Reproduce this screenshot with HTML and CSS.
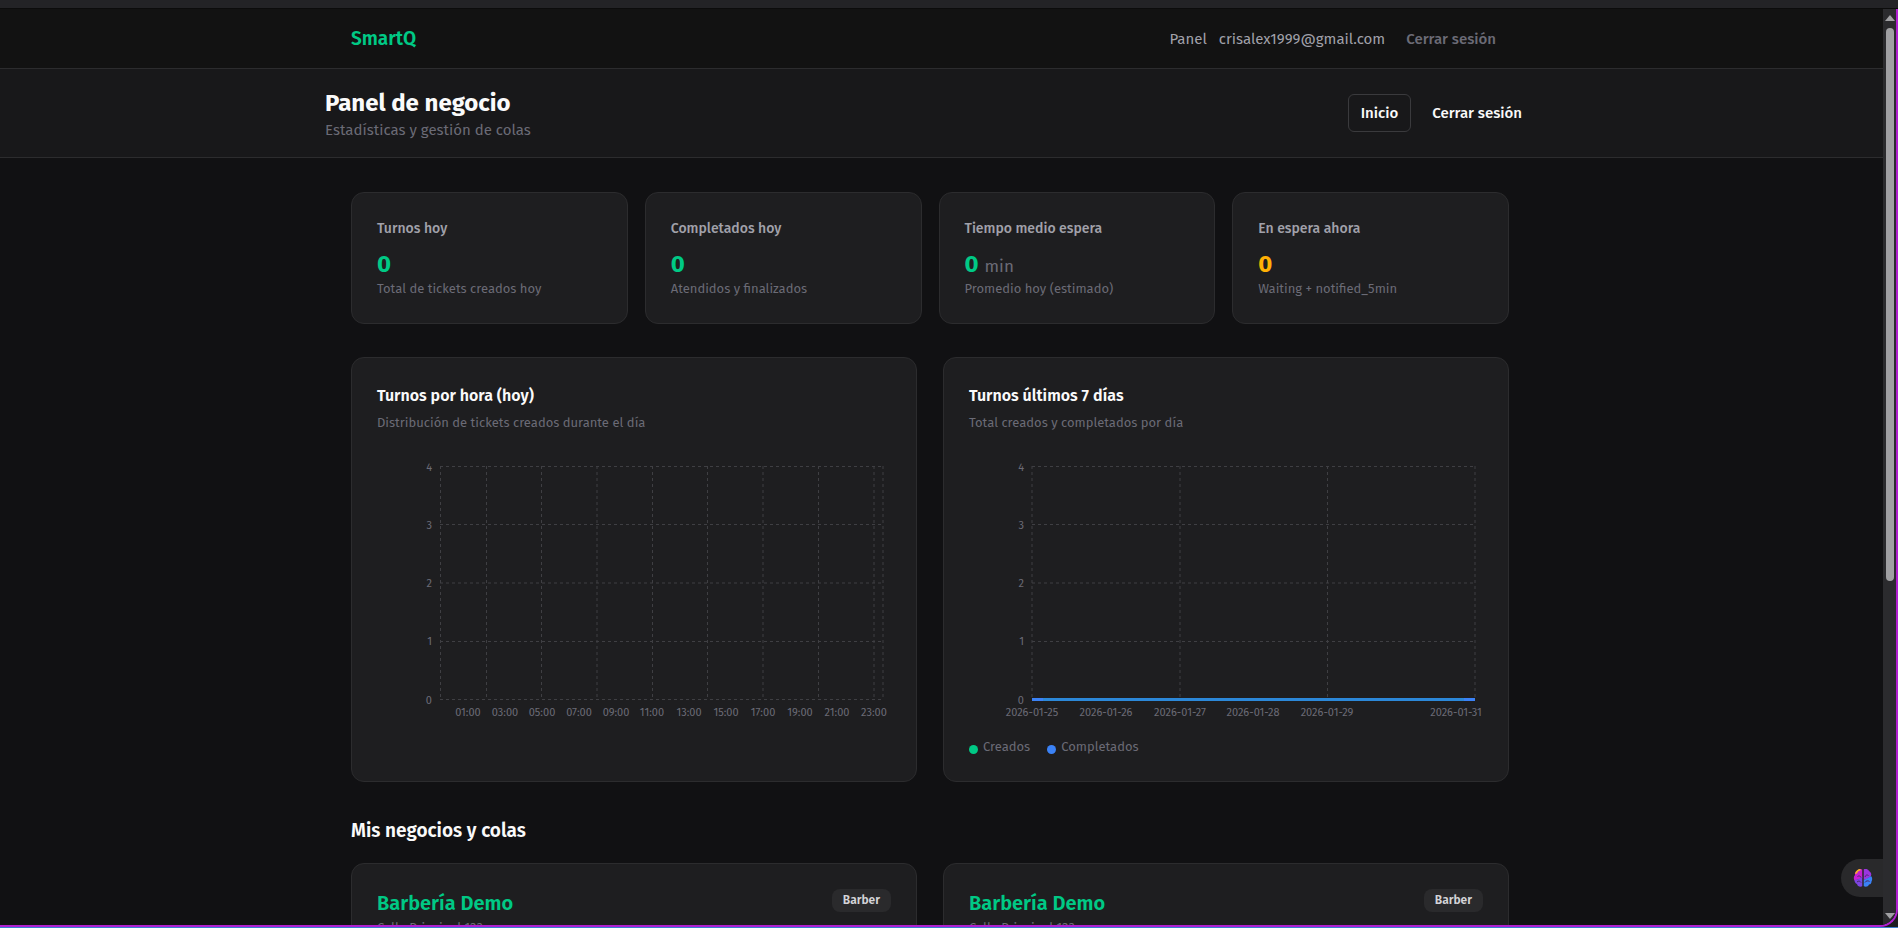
FILE: index.html
```html
<!DOCTYPE html>
<html lang="es">
<head>
  <meta charset="UTF-8">
  <meta name="viewport" content="width=device-width, initial-scale=1.0">
  <title>Panel de negocio | SmartQ</title>
  <link rel="stylesheet" href="styles.css">
</head>
<body>
  <div class="tab-strip"></div>
  <div class="window">
    <div class="page">
      <nav class="navbar band">
        <div class="container navbar-inner">
          <a class="brand" href="#">SmartQ</a>
          <div class="nav-links">
            <a href="#">Panel</a>
            <span class="nav-email">crisalex1999@gmail.com</span>
            <button class="btn btn-muted" type="button">Cerrar sesión</button>
          </div>
        </div>
      </nav>

      <header class="page-header band">
        <div class="container header-inner">
          <div>
            <h1>Panel de negocio</h1>
            <p>Estadísticas y gestión de colas</p>
          </div>
          <div class="header-actions">
            <a class="btn btn-outline" href="#">Inicio</a>
            <button class="btn" type="button">Cerrar sesión</button>
          </div>
        </div>
      </header>

      <main class="band">
        <div class="container main">
          <section class="stats">
            <div class="card stat">
              <h2>Turnos hoy</h2>
              <div class="stat-value">0</div>
              <p>Total de tickets creados hoy</p>
            </div>
            <div class="card stat">
              <h2>Completados hoy</h2>
              <div class="stat-value">0</div>
              <p>Atendidos y finalizados</p>
            </div>
            <div class="card stat">
              <h2>Tiempo medio espera</h2>
              <div class="stat-value">0 <span>min</span></div>
              <p>Promedio hoy (estimado)</p>
            </div>
            <div class="card stat">
              <h2>En espera ahora</h2>
              <div class="stat-value warning">0</div>
              <p>Waiting + notified_5min</p>
            </div>
          </section>

          <section class="two-cols charts">
            <div class="card chart-card">
              <h3>Turnos por hora (hoy)</h3>
              <p>Distribución de tickets creados durante el día</p>
              <svg class="chart" viewBox="0 0 514 278" role="img" aria-label="Turnos por hora">
                <g class="grid">
                  <path d="M63 6.5H506M63 64.5H506M63 123H506M63 181.5H506M63 239.5H506" />
                  <path d="M63.5 6V240M109.5 6V240M164.5 6V240M220 6V240M275.5 6V240M330.5 6V240M386 6V240M441.5 6V240M497 6V240M506 6V240" />
                </g>
                <g class="ticks ticks-y">
                  <text x="55" y="11">4</text>
                  <text x="55" y="69">3</text>
                  <text x="55" y="127">2</text>
                  <text x="55" y="185">1</text>
                  <text x="55" y="244">0</text>
                </g>
                <g class="ticks">
                  <text x="91" y="256">01:00</text>
                  <text x="128" y="256">03:00</text>
                  <text x="165" y="256">05:00</text>
                  <text x="202" y="256">07:00</text>
                  <text x="239" y="256">09:00</text>
                  <text x="275" y="256">11:00</text>
                  <text x="312" y="256">13:00</text>
                  <text x="349" y="256">15:00</text>
                  <text x="386" y="256">17:00</text>
                  <text x="423" y="256">19:00</text>
                  <text x="460" y="256">21:00</text>
                  <text x="497" y="256">23:00</text>
                </g>
              </svg>
            </div>

            <div class="card chart-card">
              <h3>Turnos últimos 7 días</h3>
              <p>Total creados y completados por día</p>
              <svg class="chart" viewBox="0 0 514 278" role="img" aria-label="Turnos últimos 7 días">
                <g class="grid">
                  <path d="M63 6.5H506M63 64.5H506M63 123H506M63 181.5H506M63 239.5H506" />
                  <path d="M63 6V240M211 6V240M358.5 6V240M506 6V240" />
                </g>
                <path class="line-completed" d="M63 239.5H506" />
                <path class="line-overlap" d="M74 239.5H495" />
                <g class="ticks ticks-y">
                  <text x="55" y="11">4</text>
                  <text x="55" y="69">3</text>
                  <text x="55" y="127">2</text>
                  <text x="55" y="185">1</text>
                  <text x="55" y="244">0</text>
                </g>
                <g class="ticks">
                  <text x="63" y="256">2026-01-25</text>
                  <text x="137" y="256">2026-01-26</text>
                  <text x="211" y="256">2026-01-27</text>
                  <text x="284" y="256">2026-01-28</text>
                  <text x="358" y="256">2026-01-29</text>
                  <text x="487" y="256">2026-01-31</text>
                </g>
              </svg>
              <ul class="legend">
                <li><i class="dot"></i>Creados</li>
                <li><i class="dot dot-blue"></i>Completados</li>
              </ul>
            </div>
          </section>

          <h2 class="section-title">Mis negocios y colas</h2>
          <section class="two-cols">
            <div class="card business">
              <div>
                <h3>Barbería Demo</h3>
                <p>Calle Principal 123</p>
              </div>
              <span class="badge">Barber</span>
            </div>
            <div class="card business">
              <div>
                <h3>Barbería Demo</h3>
                <p>Calle Principal 123</p>
              </div>
              <span class="badge">Barber</span>
            </div>
          </section>
        </div>
      </main>

      <button class="assistant" type="button" aria-label="Asistente">
        <svg viewBox="0 0 20 20" width="20" height="20">
          <path fill="#c61fd0" d="M9.500 1.500C7.500.5 5.500 1 4.500 2.500 2.500 3 1.500 5 2 7 .5 8.500.5 11 1.500 12.500L5 11.500 9.500 10z" />
          <path fill="#f5b521" d="M7.500 1C5.500.8 2.500 2.500 2 6L4 5.500C4.500 3.500 6 2.500 7.500 2.500z" />
          <path fill="#7d45e0" d="M1.500 12C1.500 14 2.500 15.500 4 16 4.500 18.500 7.500 19.500 9.500 18V8L6 11z" />
          <path fill="#9a35e0" d="M10.500 1.500C12.500.5 15 1 16 3 18 4 18.800 6 18 8L14 11 10.500 12z" />
          <path fill="#3b82f6" d="M18 8C19.500 9.500 19.500 12 18.500 13.500 18.500 15.500 17.500 16.500 16 16.500 15 19 12.500 19.300 10.500 18V12L14 10.500z" />
          <path fill="none" stroke="#29292b" stroke-width="1" d="M10 1V19" />
          <path fill="none" stroke="#4a2a6a" stroke-width="1" d="M4.500 8.500C6 7.500 7.500 8 8 9.500M4 14C5.500 12.500 7 13 8 14.500M12 9C12.500 7 14 6.500 15.500 7.500M12 14.500C13 12.500 15 12.500 16.500 13.500" />
        </svg>
      </button>
    </div>

    <div class="scrollbar" aria-hidden="true">
      <svg viewBox="0 0 10 6" width="10" height="6"><path d="M5 0L10 6H0z" /></svg>
      <div class="scroll-track"><div class="scroll-thumb"></div></div>
      <svg viewBox="0 0 10 6" width="10" height="6"><path d="M0 0H10L5 6z" /></svg>
    </div>
  </div>
</body>
</html>
```
FILE: styles.css
```css
:root {
  --bg: #111113;
  --bg-nav: #121212;
  --bg-header: #18181a;
  --card: #1e1e20;
  --border: #2c2c2e;
  --text: #fafafa;
  --text-soft: #a1a1aa;
  --text-muted: #6b6b76;
  --green: #00c985;
  --blue: #3b82f6;
  --amber: #ffb005;
}
* {
  box-sizing: border-box;
}
body {
  margin: 0;
  height: 100vh;
  overflow: hidden;
  display: flex;
  flex-direction: column;
  background: #1d1d20;
  border-bottom: 1px solid #3b7fd0;
  color: var(--text);
  font-family: "Fira Sans", "Noto Sans", sans-serif;
  font-size: 15px;
  line-height: 20px;
}
h1, h2, h3, p, ul {
  margin: 0;
  padding: 0;
}
a {
  color: inherit;
  text-decoration: none;
}
.tab-strip {
  height: 9px;
  flex: none;
  background: #232326;
  border-bottom: 1px solid #0c0c0c;
}
.window {
  flex: 1;
  min-height: 0;
  display: flex;
  border-right: 2px solid #b01fd0;
  border-bottom: 2px solid #b01fd0;
  border-bottom-right-radius: 18px;
  overflow: hidden;
}
.page {
  flex: 1;
  min-width: 0;
  position: relative;
  overflow: hidden;
  background: var(--bg);
}
.band {
  padding-right: 23px;
}
.container {
  width: 100%;
  max-width: 1210px;
  margin: 0 auto;
}

/* Navigation */
.navbar {
  background: var(--bg-nav);
  border-bottom: 1px solid var(--border);
}
.navbar-inner {
  display: flex;
  align-items: center;
  justify-content: space-between;
  height: 59px;
  padding: 0 26px;
}
.brand {
  color: var(--green);
  font-size: 19px;
  font-weight: 600;
}
.nav-links {
  display: flex;
  align-items: center;
  color: var(--text-soft);
}
.nav-email {
  margin-left: 12px;
  margin-right: 8px;
}
.btn {
  border: 1px solid transparent;
  border-radius: 6px;
  background: none;
  color: var(--text);
  font: inherit;
  font-weight: 500;
  padding: 8px 12px;
}
.btn-outline {
  border-color: #3a3a3d;
}
.btn-muted {
  color: var(--text-muted);
}

/* Header */
.page-header {
  background: var(--bg-header);
  border-bottom: 1px solid var(--border);
}
.header-inner {
  display: flex;
  align-items: center;
  justify-content: space-between;
  padding: 17px 0;
}
.header-inner h1 {
  font-size: 24px;
  line-height: 34px;
  font-weight: 700;
}
.header-inner p {
  color: var(--text-muted);
}
.header-actions {
  display: flex;
  align-items: center;
  gap: 8px;
}

/* Content */
.main {
  padding: 34px 26px 26px;
}
.card {
  background: var(--card);
  border: 1px solid var(--border);
  border-radius: 13px;
  padding: 25px;
}
.stats {
  display: grid;
  grid-template-columns: repeat(4, 1fr);
  gap: 17px;
}
.stat h2 {
  color: var(--text-soft);
  font-size: 14px;
  line-height: 22px;
  font-weight: 500;
}
.stat-value {
  display: flex;
  align-items: baseline;
  gap: 6px;
  height: 32px;
  margin-top: 8px;
  color: var(--green);
  font-size: 24px;
  line-height: 32px;
  font-weight: 700;
}
.stat-value span {
  color: var(--text-muted);
  font-size: 17px;
  font-weight: 400;
}
.stat-value.warning {
  color: var(--amber);
}
.stat p,
.chart-card p,
.business p {
  color: var(--text-muted);
  font-size: 13px;
  line-height: 18px;
}
.two-cols {
  display: grid;
  grid-template-columns: 1fr 1fr;
  gap: 26px;
}
.charts {
  margin-top: 33px;
}
.chart-card h3 {
  font-size: 16px;
  line-height: 26px;
  font-weight: 600;
}
.chart-card p {
  margin-top: 5px;
}
.chart {
  display: block;
  width: 100%;
  margin-top: 28px;
}
.grid path {
  fill: none;
  stroke: #3f3f43;
  stroke-dasharray: 3 3;
}
.ticks text {
  fill: var(--text-muted);
  font-size: 11px;
  text-anchor: middle;
}
.ticks-y text {
  text-anchor: end;
}
.line-completed,
.line-overlap {
  fill: none;
  stroke: var(--blue);
  stroke-width: 3;
}
.line-overlap {
  stroke: #2c88d8;
}
.legend {
  display: flex;
  gap: 17px;
  list-style: none;
  color: var(--text-muted);
  font-size: 13px;
  line-height: 18px;
}
.legend li {
  display: flex;
  align-items: center;
  gap: 5px;
}
.dot {
  width: 9px;
  height: 9px;
  margin-top: 4px;
  border-radius: 50%;
  background: var(--green);
}
.dot-blue {
  background: var(--blue);
}
.section-title {
  margin: 34px 0 17px;
  font-size: 19px;
  line-height: 30px;
  font-weight: 600;
}
.business {
  display: flex;
  align-items: flex-start;
  justify-content: space-between;
}
.business h3 {
  color: var(--green);
  font-size: 20px;
  line-height: 28px;
  font-weight: 600;
}
.business p {
  margin-top: 2px;
}
.badge {
  padding: 2px 11px;
  border-radius: 8px;
  background: #2a2a2c;
  color: #d4d4d8;
  font-size: 12px;
  line-height: 19px;
  font-weight: 600;
}

/* Floating assistant tab */
.assistant {
  position: absolute;
  right: 0;
  bottom: 28px;
  width: 42px;
  height: 38px;
  padding: 0 0 0 2px;
  border: 0;
  border-radius: 19px 0 0 19px;
  background: #29292b;
  display: flex;
  align-items: center;
  justify-content: center;
}

/* Scrollbar */
.scrollbar {
  flex: none;
  width: 13px;
  padding: 6px 0;
  display: flex;
  flex-direction: column;
  align-items: center;
  background: #2b2b2e;
}
.scrollbar svg {
  flex: none;
  fill: #a0a0a3;
}
.scroll-track {
  flex: 1;
  padding: 7px 0;
}
.scroll-thumb {
  width: 8px;
  height: 63%;
  border-radius: 4px;
  background: #a0a0a3;
}
```
